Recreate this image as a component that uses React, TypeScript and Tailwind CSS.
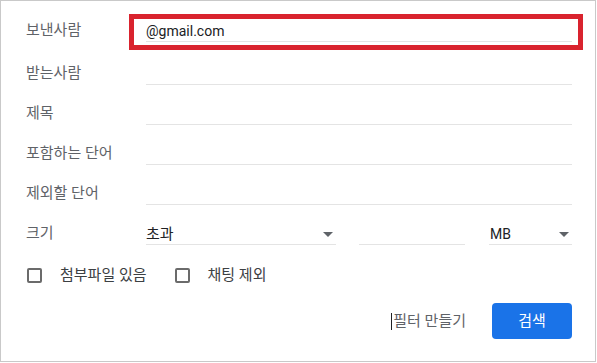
import { ReactNode } from 'react';

const font = { fontFamily: 'Roboto, "Noto Sans CJK KR", sans-serif' };

function Caret() {
  return (
    <svg width="10" height="5" viewBox="0 0 10 5" className="mb-[7px] shrink-0">
      <path d="M0 0h10L5 5z" fill="#5f6368" />
    </svg>
  );
}

function Row({ label, className, children }: { label: string; className: string; children?: ReactNode }) {
  return (
    <div className={`flex items-end ${className}`}>
      <span className="w-[120px] shrink-0 pb-[2px] text-[15px] leading-5 text-[#5f6368]">{label}</span>
      <div className="flex flex-1 items-end">{children}</div>
    </div>
  );
}

function Field({ value }: { value?: string }) {
  return (
    <div className="flex h-[30px] flex-1 items-end border-b border-[#e4e4e4] text-[14px] leading-5 text-[#202124]">
      {value}
    </div>
  );
}

function Checkbox({ label }: { label: string }) {
  return (
    <label className="flex items-center">
      <span className="h-[15px] w-[15px] rounded-[2px] border-2 border-[#6b6b6b]" />
      <span className="ml-[18px] text-[15px] leading-5 text-[#3c4043]">{label}</span>
    </label>
  );
}

export default function App() {
  return (
    <div className="relative h-[363px] w-[597px] bg-white" style={font}>
      <div className="flex h-[362px] w-[596px] flex-col border border-[#c9c9c9] pt-[1px] pl-[25px] pr-[23px]">
        <Row label="보낸사람" className="h-[40px]">
          <Field value="@gmail.com" />
        </Row>
        <Row label="받는사람" className="h-[43px]">
          <Field />
        </Row>
        <Row label="제목" className="h-[40px]">
          <Field />
        </Row>
        <Row label="포함하는 단어" className="h-[40px]">
          <Field />
        </Row>
        <Row label="제외할 단어" className="h-[40px]">
          <Field />
        </Row>
        <Row label="크기" className="h-[40px]">
          <div className="flex h-[30px] w-[190px] items-end justify-between border-b border-[#e4e4e4] pr-[3px] text-[15px] leading-5 text-[#202124]">
            <span>초과</span>
            <Caret />
          </div>
          <div className="ml-[23px] h-[30px] w-[106px] border-b border-[#e4e4e4]" />
          <div className="ml-[24px] flex h-[30px] flex-1 items-end justify-between border-b border-[#e4e4e4] pl-[1px] pr-[3px] text-[14px] leading-5 text-[#202124]">
            <span>MB</span>
            <Caret />
          </div>
        </Row>
        <div className="mt-[20px] flex h-[20px] items-center pl-[1px]">
          <Checkbox label="첨부파일 있음" />
          <div className="ml-[28px]">
            <Checkbox label="채팅 제외" />
          </div>
        </div>
        <div className="mt-[18px] flex items-center justify-end">
          <span className="flex items-center text-[15px] text-[#5f6368]">
            <span className="mr-[1px] h-[17px] w-px bg-[#202124]" />
            필터 만들기
          </span>
          <button className="ml-[26px] h-[36px] w-[80px] rounded-[4px] bg-[#1a73e8] text-[15px] text-white">검색</button>
        </div>
      </div>
      <div className="absolute left-[129px] top-[14px] h-[36px] w-[454px] border-[5px] border-[#d9232e]" />
    </div>
  );
}
